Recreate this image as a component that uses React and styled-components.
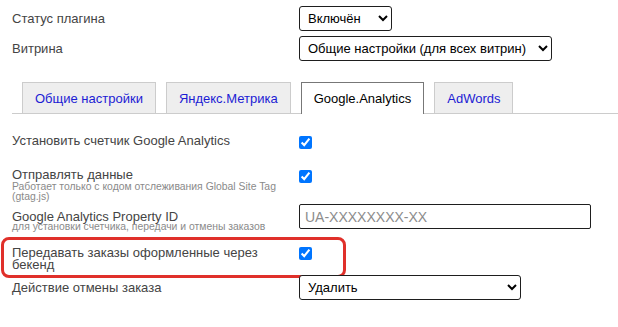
import styled, { createGlobalStyle } from "styled-components";

const GlobalStyle = createGlobalStyle`
  html, body {
    margin: 0;
    padding: 0;
    background: #fff;
  }
  body {
    font-family: "Liberation Sans", Arial, sans-serif;
    width: 618px;
    height: 327px;
    overflow: hidden;
  }
`;

const Page = styled.div`
  padding: 6px 0 0 12px;
`;

const FieldRow = styled.div`
  display: grid;
  grid-template-columns: 280px auto;
  column-gap: 7px;
  align-items: ${(p) => (p.$top ? "start" : "center")};
  margin-top: ${(p) => p.$mt || 0}px;
  position: relative;
`;

const LabelBox = styled.div`
  margin-top: ${(p) => p.$mt || 0}px;
`;

const Label = styled.div`
  font-size: 13px;
  line-height: 12px;
  color: #444;
`;

const Hint = styled.div`
  font-size: 10.4px;
  line-height: 10px;
  color: #8a8a8a;
  margin-top: ${(p) => p.$mt || 0}px;
`;

const Select = styled.select`
  width: ${(p) => p.$w}px;
  height: 25px;
  box-sizing: border-box;
  border: 1px solid #1e1e1e;
  border-radius: 3px;
  background: #fff;
  color: #000;
  font-family: "Liberation Sans", Arial, sans-serif;
  font-size: 13px;
  padding: 0 2px 0 4px;
  margin: 0;
`;

const TextInput = styled.input`
  width: 292px;
  height: 25px;
  box-sizing: border-box;
  border: 1px solid #1e1e1e;
  border-radius: 2px;
  font-family: "Liberation Sans", Arial, sans-serif;
  font-size: 14px;
  padding: 0 5px;
  margin: 0;
  &::placeholder {
    color: #8c8c8c;
  }
`;

const Check = styled.input.attrs({ type: "checkbox" })`
  width: 13px;
  height: 13px;
  margin: ${(p) => p.$mt || 0}px 0 0 0;
  justify-self: start;
`;

const Tabs = styled.div`
  display: flex;
  align-items: flex-end;
  gap: 10px;
  margin-top: 21px;
  padding-left: 10px;
  height: 31px;
  border-bottom: 1px solid #ccc;
`;

const Tab = styled.div`
  box-sizing: border-box;
  height: ${(p) => (p.$active ? 32 : 31)}px;
  margin-bottom: ${(p) => (p.$active ? -1 : 0)}px;
  padding: 0 12px;
  display: flex;
  align-items: center;
  font-size: 13px;
  border: 1px solid ${(p) => (p.$active ? "#777" : "#ccc")};
  border-bottom: 0;
  background: ${(p) => (p.$active ? "#fff" : "#eee")};
  color: ${(p) => (p.$active ? "#000" : "#1c1cd4")};
  padding-bottom: ${(p) => (p.$active ? 1 : 0)}px;
`;

const Highlight = styled.div`
  position: absolute;
  left: -11px;
  top: -10px;
  width: 345px;
  height: 41px;
  box-sizing: border-box;
  border: 3px solid #e0302a;
  border-radius: 8px;
  pointer-events: none;
`;

export default function App() {
  return (
    <>
      <GlobalStyle />
      <Page>
        <FieldRow>
          <Label>Статус плагина</Label>
          <Select $w={93} defaultValue="on">
            <option value="on">Включён</option>
            <option value="off">Выключен</option>
          </Select>
        </FieldRow>
        <FieldRow $mt={5}>
          <Label>Витрина</Label>
          <Select $w={253} defaultValue="all">
            <option value="all">Общие настройки (для всех витрин)</option>
          </Select>
        </FieldRow>

        <Tabs>
          <Tab>Общие настройки</Tab>
          <Tab>Яндекс.Метрика</Tab>
          <Tab $active>Google.Analytics</Tab>
          <Tab>AdWords</Tab>
        </Tabs>

        <FieldRow $top $mt={21}>
          <LabelBox>
            <Label>Установить счетчик Google Analytics</Label>
          </LabelBox>
          <Check $mt={1} defaultChecked />
        </FieldRow>

        <FieldRow $top $mt={20}>
          <LabelBox>
            <Label>Отправлять данные</Label>
            <Hint $mt={1}>Работает только с кодом отслеживания Global Site Tag (gtag.js)</Hint>
          </LabelBox>
          <Check $mt={1} defaultChecked />
        </FieldRow>

        <FieldRow $top $mt={2}>
          <LabelBox $mt={7}>
            <Label>Google Analytics Property ID</Label>
            <Hint $mt={-1}>для установки счетчика, передачи и отмены заказов</Hint>
          </LabelBox>
          <TextInput placeholder="UA-XXXXXXXX-XX" />
        </FieldRow>

        <FieldRow $top $mt={15}>
          <LabelBox>
            <Label>Передавать заказы оформленные через бекенд</Label>
          </LabelBox>
          <Check $mt={0} defaultChecked />
          <Highlight />
        </FieldRow>

        <FieldRow $top $mt={4}>
          <LabelBox $mt={7}>
            <Label>Действие отмены заказа</Label>
          </LabelBox>
          <Select $w={222} defaultValue="del">
            <option value="del">Удалить</option>
          </Select>
        </FieldRow>
      </Page>
    </>
  );
}
